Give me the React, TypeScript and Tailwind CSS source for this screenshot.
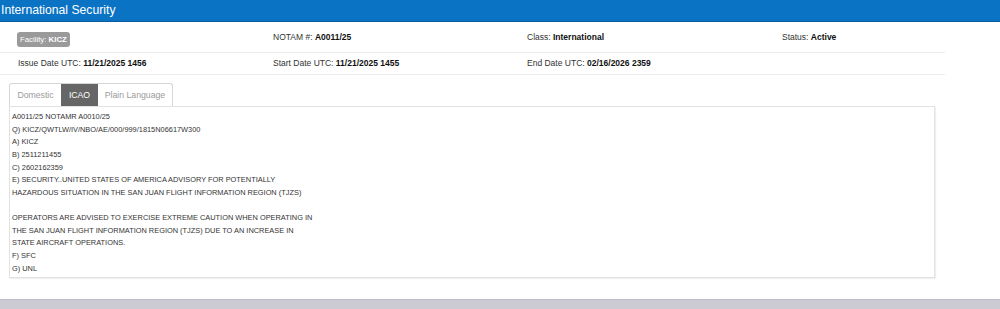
export default function App() {
    const lines = [
        'A0011/25 NOTAMR A0010/25',
        'Q) KICZ/QWTLW/IV/NBO/AE/000/999/1815N06617W300',
        'A) KICZ',
        'B) 2511211455',
        'C) 2602162359',
        'E) SECURITY..UNITED STATES OF AMERICA ADVISORY FOR POTENTIALLY',
        'HAZARDOUS SITUATION IN THE SAN JUAN FLIGHT INFORMATION REGION (TJZS)',
        '',
        'OPERATORS ARE ADVISED TO EXERCISE EXTREME CAUTION WHEN OPERATING IN',
        'THE SAN JUAN FLIGHT INFORMATION REGION (TJZS) DUE TO AN INCREASE IN',
        'STATE AIRCRAFT OPERATIONS.',
        'F) SFC',
        'G) UNL',
    ];

    return (
        <div className="flex h-[309px] w-[1000px] flex-col bg-white font-['Liberation_Sans',Arial,sans-serif] text-[#333]">
            <div className="h-[22px] border-b border-[#0a5c9c] bg-[#0a73c4] pl-[1px] text-[12.2px] leading-[21px] text-white">
                International Security
            </div>

            <div className="w-[945px]">
                <div className="flex h-[31px] items-center border-b border-[#ececec] pl-[17px] text-[8.5px]">
                    <div className="w-[256px]">
                        <span className="mt-[5px] inline-block rounded-[3px] bg-[#9a9a9a] px-[3px] py-[3px] text-[7.8px] leading-[9px] text-white">
                            Facility: <b>KICZ</b>
                        </span>
                    </div>
                    <div className="w-[254px]">
                        NOTAM #: <b className="text-[#111]">A0011/25</b>
                    </div>
                    <div className="w-[255px]">
                        Class: <b className="text-[#111]">International</b>
                    </div>
                    <div>
                        Status: <b className="text-[#111]">Active</b>
                    </div>
                </div>
                <div className="flex h-[22px] items-center border-b border-[#ececec] pl-[18px] text-[8.5px]">
                    <div className="w-[255px]">
                        Issue Date UTC: <b className="text-[#111]">11/21/2025 1456</b>
                    </div>
                    <div className="w-[254px]">
                        Start Date UTC: <b className="text-[#111]">11/21/2025 1455</b>
                    </div>
                    <div>
                        End Date UTC: <b className="text-[#111]">02/16/2026 2359</b>
                    </div>
                </div>
            </div>

            <div className="mt-[8px] flex pl-[9px] text-[8.7px] leading-[22px]">
                <div className="flex rounded-t-[3px] border border-b-0 border-[#d6d6d6]">
                    <div className="w-[51px] text-center text-[#9b9b9b]">Domestic</div>
                    <div className="w-[37px] bg-[#666] text-center text-white">ICAO</div>
                    <div className="w-[74px] text-center text-[#9b9b9b]">Plain Language</div>
                </div>
            </div>

            <div className="ml-[9px] w-[926px] border border-[#e2e2e2] px-[2px] pt-[4px] pb-[2px] text-[7.4px] leading-[12.64px] shadow-[1px_1px_1px_rgba(0,0,0,0.06)]">
                {lines.map((l, i) => (
                    <div key={i} className="h-[12.64px] whitespace-pre text-[#333]">
                        {l}
                    </div>
                ))}
            </div>

            <div className="mt-auto h-[10px] border-t border-[#bdbcc4] bg-[#cccbd3]" />
        </div>
    );
}
